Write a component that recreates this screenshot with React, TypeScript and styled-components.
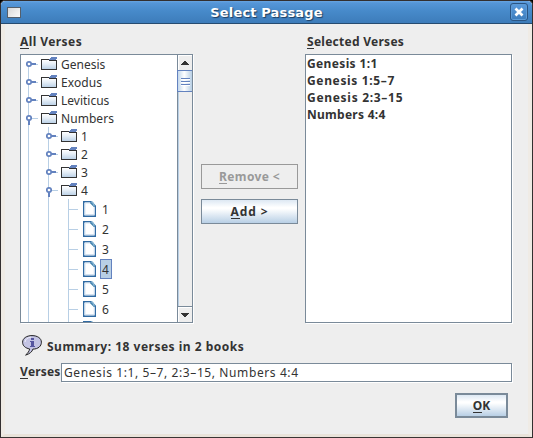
import React from "react";
import styled, { createGlobalStyle, css } from "styled-components";

const edge = "#7a8a99";
const blue = "#6382bf";
const pale = "#b8cfe5";

const Global = createGlobalStyle`
  html, body { margin: 0; padding: 0; background: #000; }
  * { box-sizing: border-box; }
`;

const Frame = styled.div`
  width: 533px;
  height: 438px;
  display: flex;
  flex-direction: column;
  overflow: hidden;
  border: 1px solid #332f30;
  border-bottom-color: #3a3534;
  border-radius: 5px 5px 0 0;
  background: #eee;
  font-family: "Noto Sans", "Open Sans", sans-serif;
  font-size: 12px;
  color: #333;
`;

const TitleBar = styled.header`
  flex: none;
  height: 23px;
  display: grid;
  grid-template-columns: 26px 1fr 26px;
  align-items: center;
  border-bottom: 1px solid #264b70;
  border-radius: 4px 4px 0 0;
  background: linear-gradient(#68a5e2 0, #5596d8 2px, #478aca 10px, #3d7cba 100%);
`;

const WindowMenu = styled.div`
  width: 14px;
  height: 11px;
  margin-left: 6px;
  border: 1px solid #555f6b;
  background: linear-gradient(135deg, #d8d8d8, #fafafa);
`;

const Title = styled.h1`
  margin: 0;
  padding-top: 2px;
  text-align: center;
  font: bold 13px/20px "DejaVu Sans", sans-serif;
  letter-spacing: 0.15px;
  color: #fff;
  text-shadow: 1px 1px 1px #1d3c5e;
`;

const CloseButton = styled.button`
  width: 18px;
  height: 18px;
  margin-left: 4px;
  padding: 0;
  display: grid;
  place-items: center;
  border: 1px solid #2b5583;
  border-radius: 3px;
  background: linear-gradient(#5b9bdc, #3c7cbc);
  box-shadow: inset 0 0 0 1px #5c9ad6;
`;

const Body = styled.main`
  flex: 1;
  display: flex;
  flex-direction: column;
  padding: 9px 15px 0 15px;
  border: solid #efebe5;
  border-width: 0 4px 3px;
  border-bottom-color: #e9e3da;
`;

const Columns = styled.section`
  display: grid;
  grid-template-columns: 173px 97px 206px;
  column-gap: 8px;
  height: 290px;
`;

const Column = styled.div`
  display: flex;
  flex-direction: column;
`;

const SelectedColumn = styled(Column)`
  margin-left: -1px;
`;

const Bold = styled.span<{ $track?: number }>`
  font-weight: 700;
  letter-spacing: ${(p) => p.$track ?? 0}px;
  white-space: pre;
`;

const Heading = styled.label<{ $indent?: number }>`
  height: 21px;
  line-height: 17px;
  padding-left: ${(p) => p.$indent ?? 0}px;
`;

const Key = styled.span`
  box-shadow: 0 1px 0 currentColor;
  display: inline-block;
  line-height: 13px;
`;

const sunken = css`
  border: 1px solid ${edge};
  background: #fff;
  box-shadow: 1px 1px 0 #fff;
`;

const TreePane = styled.div`
  ${sunken}
  height: 269px;
  display: grid;
  grid-template-columns: 156px 15px;
  overflow: hidden;
`;

const Tree = styled.div`
  height: 267px;
  overflow: hidden;
`;

const Row = styled.div<{ $leaf?: boolean }>`
  height: ${(p) => (p.$leaf ? 20 : 18)}px;
  display: flex;
  align-items: center;
  svg { flex: none; display: block; }
`;

const Label = styled.span<{ $leaf?: boolean; $selected?: boolean; $track?: number }>`
  height: ${(p) => (p.$leaf ? 20 : 18)}px;
  line-height: ${(p) => (p.$leaf ? 19 : 17)}px;
  margin-left: ${(p) => (p.$leaf ? 4 : 3)}px;
  padding: ${(p) => (p.$leaf ? "0 2px 0 1px" : "0")};
  letter-spacing: ${(p) => p.$track ?? 0}px;
  border: 1px solid ${(p) => (p.$selected ? blue : "transparent")};
  background: ${(p) => (p.$selected ? pale : "transparent")};
`;

const ScrollBar = styled.div`
  display: flex;
  flex-direction: column;
  border-left: 1px solid ${edge};
  background: #eee;
  box-shadow: inset 1px 0 0 ${pale};
`;

const Arrow = styled.button`
  height: 15px;
  padding: 0;
  border: 0;
  display: grid;
  place-items: center;
  background: #eee;
  box-shadow: inset 1px 1px 0 #fff;
`;

const Thumb = styled.div`
  height: 22px;
  margin-left: -1px;
  padding: 5px 2px 0 3px;
  border: 1px solid ${blue};
  border-right: 0;
  background: linear-gradient(90deg, #c4d8ec, #fff 45%, #b8cfe5);
  svg { display: block; }
`;

const Track = styled.div`
  flex: 1;
  border-bottom: 1px solid ${edge};
`;

const Actions = styled.div`
  display: flex;
  flex-direction: column;
  gap: 10px;
  padding-top: 131px;
`;

const Button = styled.button<{ $heavy?: boolean }>`
  height: 25px;
  padding: ${(p) => (p.$heavy ? "0" : "1px 0 0")};
  font: bold 12px/18px "Noto Sans", "Open Sans", sans-serif;
  color: #333;
  border: ${(p) => (p.$heavy ? 2 : 1)}px solid ${edge};
  background: linear-gradient(#dde8f3 0, #fff 32%, #fff 38%, #b8cfe5 100%);
  &:disabled {
    color: #999;
    border-color: #999;
    background: #eee;
  }
`;

const List = styled.ul`
  ${sunken}
  height: 269px;
  margin: 0;
  padding: 1px 0 0 1px;
  list-style: none;
  li { height: 17px; line-height: 16px; }
`;

const Summary = styled.section`
  height: 40px;
  display: flex;
  align-items: center;
  gap: 5px;
  padding: 6px 0 0 2px;
`;

const Field = styled.div`
  display: grid;
  grid-template-columns: 41px 451px;
  height: 18px;
  line-height: 18px;
`;

const Input = styled.div<{ $track: number }>`
  ${sunken}
  padding-left: 2px;
  line-height: 17px;
  white-space: pre;
  letter-spacing: ${(p) => p.$track}px;
`;

const Footer = styled.footer`
  display: flex;
  justify-content: flex-end;
  padding: 12px 5px 0 0;
  ${Button} { width: 53px; }
`;

const Folder = () => (
  <svg width="16" height="14" viewBox="0 0 16 14" shapeRendering="crispEdges">
    <defs>
      <linearGradient id="folder" x2="0" y2="1">
        <stop offset="0" stopColor="#fff" />
        <stop offset=".4" stopColor="#e7eff7" />
        <stop offset="1" stopColor="#b4cce4" />
      </linearGradient>
    </defs>
    <path d="M1 3h14v10H1z" fill="url(#folder)" />
    <path d="M0.5 2v10.5M0 12.5h16M15.5 3v9M1 2.5h7M8 3.5h8" fill="none" stroke="#333" />
    <path d="M10 0h6v2h-1v1H8V2h1V1h1z" fill={blue} />
  </svg>
);

const Leaf = () => (
  <svg width="13" height="16" viewBox="0 0 13 16">
    <path d="M.7.7h7.5L12.3 5v10.3H.7z" fill="#fff" stroke="#2f6aa3" strokeWidth="1.4" />
    <path d="M2 14V2h5.5M2 13.5h9.2V6" fill="none" stroke="#d4e3f1" />
    <path d="M7.3 1.5l4.2 4.3M9 1l3 3.5" fill="none" stroke="#347aa8" strokeWidth="1.1" />
    <path d="M8 1h2v2h1v2" fill="none" stroke="#9fc7df" />
  </svg>
);

type Node = { text: string; level: number; open?: boolean; leaf?: boolean; selected?: boolean; track?: number };

const nodes: Node[] = [
  { text: "Genesis", level: 0 },
  { text: "Exodus", level: 0, track: 0.1 },
  { text: "Leviticus", level: 0 },
  { text: "Numbers", level: 0, open: true, track: 0.05 },
  { text: "1", level: 1 },
  { text: "2", level: 1 },
  { text: "3", level: 1 },
  { text: "4", level: 1, open: true },
  ...["1", "2", "3", "4", "5", "6", ""].map((text) => ({ text, level: 2, leaf: true, selected: text === "4" })),
];

const Guides = ({ node, first }: { node: Node; first: boolean }) => {
  const { level, leaf, open } = node;
  const h = leaf ? 20 : 18;
  const x = 7 + level * 20;
  return (
    <svg width={leaf ? 62 : 20 + level * 20} height={h} shapeRendering="crispEdges">
      {Array.from({ length: level + 1 }, (_, i) => (
        <rect key={i} x={7 + i * 20} y={first ? 9 : 0} width="1" height={h} fill={pale} />
      ))}
      <rect x={x} y={leaf ? 10 : 9} width="10" height="1" fill={pale} />
      {!leaf && (
        <g shapeRendering="auto">
          {open ? (
            <rect x={x} y="11" width="2" height="5" fill={blue} />
          ) : (
            <rect x={x + 3} y="8" width="5" height="2" fill={blue} />
          )}
          <circle cx={x + 1} cy="9" r="2.2" fill="#fff" stroke={blue} strokeWidth="1.7" />
        </g>
      )}
    </svg>
  );
};

const InfoBubble = () => (
  <svg width="20" height="22" viewBox="0 0 20 22">
    <path d="M10 .6C4.5.6.6 3.4.6 7.2s3 6 7 6.7c-.2 2-1.7 4.3-4 6.2 4-1.2 6.5-3.2 7.3-6 5.3 0 8.500-3 8.500-6.900S15.500.6 10 .6z" fill="#c4c4e4" stroke="#222" />
    <path d="M3 7c.2-2.800 3-4.700 6-4.900" fill="none" stroke="#eeeef9" />
    <path d="M9 3h3v2H9zM8 6h4v5h1v1H8v-1h1V7H8z" fill="#5656a0" shapeRendering="crispEdges" />
  </svg>
);

const selected: [string, number][] = [
  ["Genesis 1:1", 0.36],
  ["Genesis 1:5–7", 0.65],
  ["Genesis 2:3–15", 0.7],
  ["Numbers 4:4", 0.27],
];

export default function App() {
  return (
    <>
      <Global />
      <Frame>
        <TitleBar>
          <WindowMenu />
          <Title>Select Passage</Title>
          <CloseButton aria-label="Close">
            <svg width="10" height="10" viewBox="0 0 10 10">
              <path d="M1.500 1.500l7 7M8.500 1.500l-7 7" stroke="#fff" strokeWidth="2.7" />
            </svg>
          </CloseButton>
        </TitleBar>
        <Body>
          <Columns>
            <Column>
              <Heading><Bold $track={0.42}><Key>A</Key>ll Verses</Bold></Heading>
              <TreePane>
                <Tree>
                  {nodes.map((n, i) => (
                    <Row key={i} $leaf={n.leaf}>
                      <Guides node={n} first={i === 0} />
                      {n.leaf ? <Leaf /> : <Folder />}
                      <Label $leaf={n.leaf} $selected={n.selected} $track={n.track}>{n.text}</Label>
                    </Row>
                  ))}
                </Tree>
                <ScrollBar>
                  <Arrow aria-label="Up">
                    <svg width="8" height="4" shapeRendering="crispEdges"><path d="M3 0h2v1h1v1h1v1h1v1H0V3h1V2h1V1h1z" fill="#333" /></svg>
                  </Arrow>
                  <Thumb>
                    <svg width="10" height="10" shapeRendering="crispEdges">
                      <path d="M0 3.500h9M0 6.500h9M0 9.500h9" stroke="#fff" />
                      <path d="M0 2.500h9M0 5.500h9M0 8.500h9" stroke={blue} />
                    </svg>
                  </Thumb>
                  <Track />
                  <Arrow aria-label="Down">
                    <svg width="8" height="4" shapeRendering="crispEdges"><path d="M0 0h8v1H7v1H6v1H5v1H3V3H2V2H1V1H0z" fill="#333" /></svg>
                  </Arrow>
                </ScrollBar>
              </TreePane>
            </Column>
            <Actions>
              <Button disabled><Bold $track={0.35}><Key>R</Key>emove &lt;</Bold></Button>
              <Button><Bold $track={0.9}><Key>A</Key>dd &gt;</Bold></Button>
            </Actions>
            <SelectedColumn>
              <Heading $indent={2}><Bold $track={0.27}><Key>S</Key>elected Verses</Bold></Heading>
              <List>
                {selected.map(([t, track]) => (
                  <li key={t}><Bold $track={track}>{t}</Bold></li>
                ))}
              </List>
            </SelectedColumn>
          </Columns>
          <Summary>
            <InfoBubble />
            <Bold $track={0.5}>Summary: 18 verses in 2 books</Bold>
          </Summary>
          <Field>
            <Bold $track={0.15}><Key>V</Key>erses</Bold>
            <Input $track={0.6}>Genesis 1:1, 5–7, 2:3–15, Numbers 4:4</Input>
          </Field>
          <Footer>
            <Button $heavy><Bold><Key>O</Key>K</Bold></Button>
          </Footer>
        </Body>
      </Frame>
    </>
  );
}
